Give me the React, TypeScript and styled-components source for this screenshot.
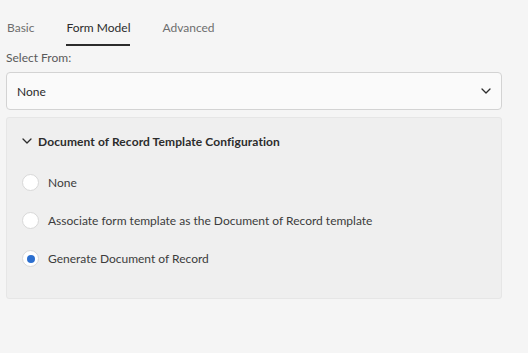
import React, { useState } from 'react';
import styled, { createGlobalStyle } from 'styled-components';

const Global = createGlobalStyle`
    html, body {
        margin: 0;
        padding: 0;
        background-color: #f5f5f5;
    }
    body {
        font-family: 'Lato', 'Open Sans', sans-serif;
        color: #4b4b4b;
    }
`;

const Page = styled.div`
    width: 528px;
    height: 353px;
    padding: 0 26px 0 6px;
    box-sizing: border-box;
`;

const Tabs = styled.div`
    display: flex;
    gap: 32px;
    padding: 19px 0 0 1px;
`;

const Tab = styled.div<{ $active?: boolean }>`
    font-size: 12px;
    line-height: 18px;
    padding-bottom: 7px;
    color: ${(p) => (p.$active ? '#2c2c2c' : '#6e6e6e')};
    border-bottom: 2px solid ${(p) => (p.$active ? '#2c2c2c' : 'transparent')};
    cursor: pointer;
`;

const Label = styled.div`
    font-size: 12px;
    line-height: 18px;
    margin-top: 3px;
    color: #5a5a5a;
`;

const Select = styled.div`
    display: flex;
    align-items: center;
    justify-content: space-between;
    height: 38px;
    margin-top: 5px;
    padding: 0 10px 0 10px;
    box-sizing: border-box;
    background-color: #fafafa;
    border: 1px solid #d3d3d3;
    border-radius: 4px;
    font-size: 12px;
    color: #2c2c2c;
`;

const Panel = styled.div`
    margin-top: 7px;
    height: 182px;
    box-sizing: border-box;
    background-color: #efefef;
    border: 1px solid #e6e6e6;
    border-radius: 3px;
    padding: 14px 0 0 15px;
`;

const PanelHeader = styled.div`
    display: flex;
    align-items: center;
    gap: 6px;
    font-size: 12px;
    font-weight: 700;
    letter-spacing: 0.1px;
    color: #2c2c2c;
    height: 18px;
`;

const Options = styled.div`
    display: flex;
    flex-direction: column;
    gap: 21px;
    margin-top: 24px;
`;

const Option = styled.label`
    display: flex;
    align-items: center;
    gap: 9px;
    font-size: 12px;
    line-height: 17px;
    color: #3c3c3c;
    cursor: pointer;
`;

const Radio = styled.span<{ $checked?: boolean }>`
    width: 17px;
    height: 17px;
    border-radius: 50%;
    box-sizing: border-box;
    border: 1px solid #d8d8d8;
    background-color: #ffffff;
    display: flex;
    align-items: center;
    justify-content: center;
    flex-shrink: 0;

    &::after {
        content: '';
        width: 8px;
        height: 8px;
        border-radius: 50%;
        background-color: #2c6fcf;
        display: ${(p) => (p.$checked ? 'block' : 'none')};
    }
`;

const Chevron = ({ size = 10 }: { size?: number }) => (
    <svg width={size} height={size} viewBox="0 0 10 10" fill="none">
        <path d="M1 3 L5 7 L9 3" stroke="#2c2c2c" strokeWidth="1.3" strokeLinecap="round" strokeLinejoin="round" />
    </svg>
);

const options = [
    'None',
    'Associate form template as the Document of Record template',
    'Generate Document of Record',
];

export default function App() {
    const [tab, setTab] = useState('Form Model');
    const [choice, setChoice] = useState(2);

    return (
        <Page>
            <Global />
            <Tabs>
                {['Basic', 'Form Model', 'Advanced'].map((t) => (
                    <Tab key={t} $active={t === tab} onClick={() => setTab(t)}>
                        {t}
                    </Tab>
                ))}
            </Tabs>
            <Label>Select From:</Label>
            <Select>
                <span>None</span>
                <Chevron />
            </Select>
            <Panel>
                <PanelHeader>
                    <Chevron />
                    Document of Record Template Configuration
                </PanelHeader>
                <Options>
                    {options.map((o, i) => (
                        <Option key={o} onClick={() => setChoice(i)}>
                            <Radio $checked={choice === i} />
                            {o}
                        </Option>
                    ))}
                </Options>
            </Panel>
        </Page>
    );
}
